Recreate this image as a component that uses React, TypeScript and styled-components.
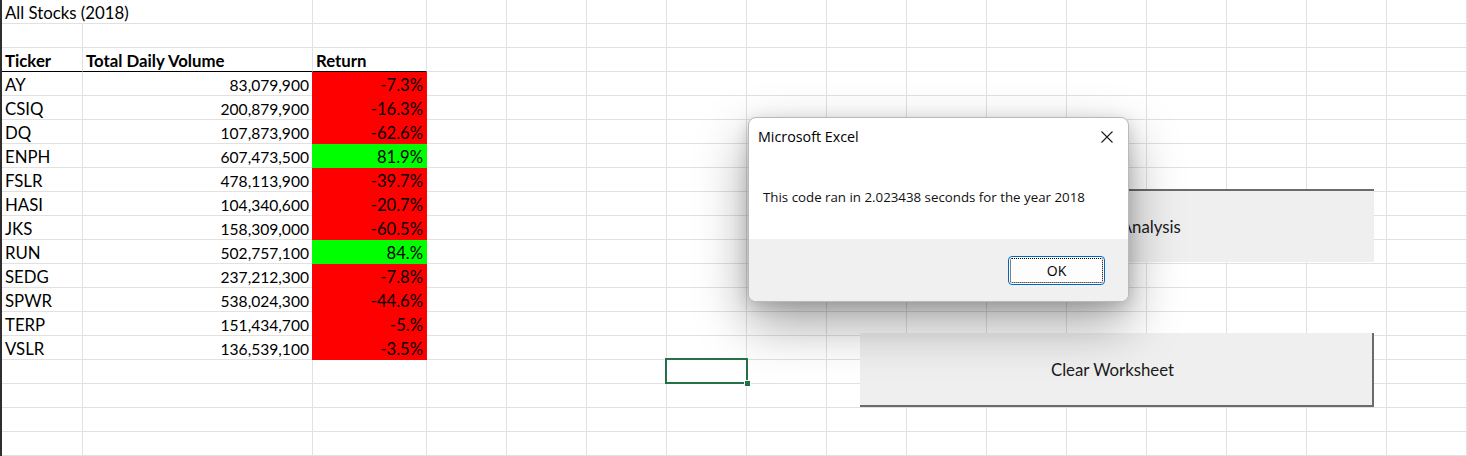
import React from "react";
import styled, { createGlobalStyle } from "styled-components";

const GRID = "#e1e1e1";
const SHEET_FONT = `Lato, "Liberation Sans", sans-serif`;
const UI_FONT = `"Segoe UI", "Open Sans", "Noto Sans", sans-serif`;

const GlobalStyle = createGlobalStyle`
  html, body {
    margin: 0;
    padding: 0;
    background: #ffffff;
    overflow: hidden;
  }
  #root {
    width: 1467px;
    height: 456px;
  }
`;

const Sheet = styled.div`
  position: relative;
  box-sizing: border-box;
  width: 1467px;
  height: 456px;
  overflow: hidden;
  border-left: 2px solid #2e2e2e;
  display: grid;
  grid-template-columns: 81px 230px 114px repeat(13, 80px);
  grid-auto-rows: 24px;
  background: #ffffff;
`;

type CellProps = {
  $align?: "left" | "right";
  $bold?: boolean;
  $fill?: string;
  $noRight?: boolean;
  $rule?: boolean;
  $size?: number;
};

const Cell = styled.div<CellProps>`
  box-sizing: border-box;
  min-width: 0;
  border-right: 1px solid
    ${(p) => (p.$noRight ? "transparent" : p.$fill ?? GRID)};
  border-bottom: 1px solid ${(p) => (p.$rule ? "#000000" : p.$fill ?? GRID)};
  background: ${(p) => p.$fill ?? "transparent"};
  margin-left: ${(p) => (p.$fill ? "-1px" : "0")};
  display: flex;
  align-items: flex-end;
  justify-content: ${(p) => (p.$align === "right" ? "flex-end" : "flex-start")};
  padding: 0 3px 1px;
  font-family: ${SHEET_FONT};
  font-size: ${(p) => p.$size ?? 16.8}px;
  line-height: 18px;
  font-weight: ${(p) => (p.$bold ? 700 : 400)};
  color: #000000;
  white-space: nowrap;
  overflow: visible;
`;

const RowHeaderMark = styled.div`
  position: absolute;
  left: -2px;
  top: 359px;
  width: 2px;
  height: 24px;
  background: #217346;
`;

const Selection = styled.div`
  position: absolute;
  left: 663px;
  top: 358px;
  width: 83px;
  height: 26px;
  box-sizing: border-box;
  border: 2px solid #217346;
`;

const FillHandle = styled.div`
  position: absolute;
  right: -5px;
  bottom: -5px;
  width: 7px;
  height: 7px;
  box-sizing: border-box;
  background: #217346;
  border: 1px solid #ffffff;
`;

const SheetButton = styled.div<{ $pressed?: boolean }>`
  position: absolute;
  left: 858px;
  width: 514px;
  box-sizing: border-box;
  background: #efefef;
  display: flex;
  align-items: center;
  justify-content: center;
  padding-right: ${(p) => (p.$pressed ? 12 : 7)}px;
  font-family: ${SHEET_FONT};
  font-size: 16.8px;
  color: #1a1a1a;
  white-space: nowrap;
  border-top: ${(p) => (p.$pressed ? "2px solid #6b6b6b" : "0")};
  border-left: ${(p) => (p.$pressed ? "2px solid #6b6b6b" : "0")};
  border-right: ${(p) => (p.$pressed ? "0" : "2px solid #6b6b6b")};
  border-bottom: ${(p) => (p.$pressed ? "0" : "2px solid #6b6b6b")};
`;

const Dialog = styled.div`
  position: absolute;
  left: 746px;
  top: 117px;
  width: 381px;
  height: 185px;
  box-sizing: border-box;
  border: 1px solid #b9b9b9;
  border-radius: 8px;
  background: #ffffff;
  overflow: hidden;
  display: flex;
  flex-direction: column;
  box-shadow: 0 22px 52px rgba(0, 0, 0, 0.36), 0 4px 16px rgba(0, 0, 0, 0.16);
  font-family: ${UI_FONT};
  color: #000000;
`;

const TitleBar = styled.div`
  height: 37px;
  display: flex;
  align-items: center;
  justify-content: space-between;
  padding-left: 9px;
  font-size: 14.3px;
`;

const CloseButton = styled.div`
  width: 42px;
  height: 37px;
  display: flex;
  align-items: center;
  justify-content: center;
`;

const Body = styled.div`
  flex: 1;
  display: flex;
  align-items: center;
  padding-left: 14px;
  font-size: 13.3px;
  color: #111111;
`;

const Footer = styled.div`
  height: 62px;
  background: #f0f0f0;
  display: flex;
  align-items: center;
  justify-content: flex-end;
  padding-right: 23px;
`;

const OkButton = styled.div`
  width: 97px;
  height: 29px;
  box-sizing: border-box;
  border: 1px solid #0067c0;
  border-radius: 4px;
  background: #fdfdfd;
  outline: 1px dotted #000000;
  outline-offset: -3px;
  display: flex;
  align-items: center;
  justify-content: center;
  font-size: 14px;
`;

type Row = { ticker: string; volume: string; ret: string; up: boolean };

const rows: Row[] = [
  { ticker: "AY", volume: "83,079,900", ret: "-7.3%", up: false },
  { ticker: "CSIQ", volume: "200,879,900", ret: "-16.3%", up: false },
  { ticker: "DQ", volume: "107,873,900", ret: "-62.6%", up: false },
  { ticker: "ENPH", volume: "607,473,500", ret: "81.9%", up: true },
  { ticker: "FSLR", volume: "478,113,900", ret: "-39.7%", up: false },
  { ticker: "HASI", volume: "104,340,600", ret: "-20.7%", up: false },
  { ticker: "JKS", volume: "158,309,000", ret: "-60.5%", up: false },
  { ticker: "RUN", volume: "502,757,100", ret: "84.%", up: true },
  { ticker: "SEDG", volume: "237,212,300", ret: "-7.8%", up: false },
  { ticker: "SPWR", volume: "538,024,300", ret: "-44.6%", up: false },
  { ticker: "TERP", volume: "151,434,700", ret: "-5.%", up: false },
  { ticker: "VSLR", volume: "136,539,100", ret: "-3.5%", up: false },
];

const COLS = 16;
const TOTAL_ROWS = 19;

function blanks(from: number, key: string) {
  const out: React.ReactNode[] = [];
  for (let c = from; c < COLS; c++) out.push(<Cell key={`${key}-${c}`} />);
  return out;
}

export default function App() {
  const cells: React.ReactNode[] = [];

  cells.push(
    <Cell key="r1-a" $noRight>
      All Stocks (2018)
    </Cell>
  );
  cells.push(...blanks(1, "r1"));

  cells.push(...blanks(0, "r2"));

  cells.push(
    <Cell key="r3-a" $bold $rule>
      Ticker
    </Cell>,
    <Cell key="r3-b" $bold $rule>
      Total Daily Volume
    </Cell>,
    <Cell key="r3-c" $bold $rule>
      Return
    </Cell>
  );
  cells.push(...blanks(3, "r3"));

  rows.forEach((r, i) => {
    const fill = r.up ? "#00ff00" : "#ff0000";
    cells.push(
      <Cell key={`d${i}-a`}>{r.ticker}</Cell>,
      <Cell key={`d${i}-b`} $align="right" $size={15.6}>
        {r.volume}
      </Cell>,
      <Cell key={`d${i}-c`} $align="right" $fill={fill} $size={16.6}>
        {r.ret}
      </Cell>
    );
    cells.push(...blanks(3, `d${i}`));
  });

  const used = 3 + rows.length;
  for (let r = used; r < TOTAL_ROWS; r++) cells.push(...blanks(0, `e${r}`));

  return (
    <>
      <GlobalStyle />
      <Sheet>
        {cells}
        <RowHeaderMark />
        <Selection>
          <FillHandle />
        </Selection>
        <SheetButton $pressed style={{ top: 189, height: 73 }}>
          Run Stock Analysis
        </SheetButton>
        <SheetButton style={{ top: 333, height: 74 }}>Clear Worksheet</SheetButton>
        <Dialog>
          <TitleBar>
            <span>Microsoft Excel</span>
            <CloseButton>
              <svg width="12" height="12" viewBox="0 0 12 12">
                <path
                  d="M0.5 0.5 L11.5 11.5 M11.5 0.5 L0.5 11.5"
                  stroke="#1b1b1b"
                  strokeWidth="1.1"
                  fill="none"
                />
              </svg>
            </CloseButton>
          </TitleBar>
          <Body>This code ran in 2.023438 seconds for the year 2018</Body>
          <Footer>
            <OkButton>OK</OkButton>
          </Footer>
        </Dialog>
      </Sheet>
    </>
  );
}
